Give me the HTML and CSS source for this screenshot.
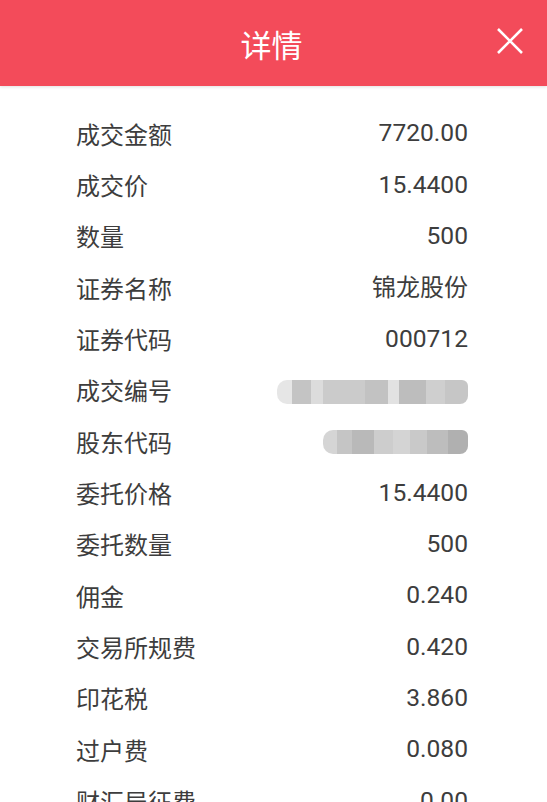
FILE: index.html
```html
<!DOCTYPE html>
<html lang="zh">
<head>
<meta charset="utf-8">
<link rel="stylesheet" href="styles.css">
</head>
<body>
<header class="bar">
  <h1 class="title">详情</h1>
  <svg class="close" viewBox="0 0 26 26" width="26" height="26"><path d="M1 1L25 25M25 1L1 25" stroke="#fff" stroke-width="2.6" fill="none"/></svg>
</header>
<main class="list">
  <div class="row"><span class="k">成交金额</span><span class="v">7720.00</span></div>
  <div class="row"><span class="k">成交价</span><span class="v">15.4400</span></div>
  <div class="row"><span class="k">数量</span><span class="v">500</span></div>
  <div class="row"><span class="k">证券名称</span><span class="v cjk">锦龙股份</span></div>
  <div class="row"><span class="k">证券代码</span><span class="v">000712</span></div>
  <div class="row"><span class="k">成交编号</span><span class="blur blur-a"></span></div>
  <div class="row"><span class="k">股东代码</span><span class="blur blur-b"></span></div>
  <div class="row"><span class="k">委托价格</span><span class="v">15.4400</span></div>
  <div class="row"><span class="k">委托数量</span><span class="v">500</span></div>
  <div class="row"><span class="k">佣金</span><span class="v">0.240</span></div>
  <div class="row"><span class="k">交易所规费</span><span class="v">0.420</span></div>
  <div class="row"><span class="k">印花税</span><span class="v">3.860</span></div>
  <div class="row"><span class="k">过户费</span><span class="v">0.080</span></div>
  <div class="row"><span class="k">财汇局征费</span><span class="v">0.00</span></div>
</main>
</body>
</html>
```
FILE: styles.css
```css
* { box-sizing: border-box; }
html, body { margin: 0; padding: 0; background: #fff; }
body {
  width: 547px;
  height: 802px;
  overflow: hidden;
  font-family: Roboto, "Noto Sans CJK SC", sans-serif;
}
.bar {
  height: 86px;
  background: #f34b5a;
  display: flex;
  align-items: center;
  justify-content: center;
  position: relative;
  box-shadow: 0 1px 3px rgba(0,0,0,0.12);
}
.title {
  margin: 0;
  color: #fff;
  font-size: 31px;
  font-weight: 400;
  line-height: 1;
  font-family: "Noto Sans CJK SC", sans-serif;
  transform: translateX(-2px);
}
.close {
  position: absolute;
  right: 24px;
  top: 28px;
}
.list {
  padding: 22px 79px 0 76px;
}
.row {
  height: 51.33px;
  display: flex;
  align-items: center;
  justify-content: space-between;
  color: #3d3d3d;
  font-size: 24px;
}
.k {
  font-family: "Noto Sans CJK SC", sans-serif;
  font-size: 24px;
  line-height: 1;
}
.v {
  line-height: 1;
  font-size: 24.6px;
}
.v.cjk {
  font-size: 24px;
}
.blur {
  display: block;
  height: 24px;
  border-radius: 10px 6px 8px 10px;
}
.blur-a {
  width: 191px;
  margin-top: 4px;
  background: linear-gradient(90deg, #e6e6e6 0 8%, #c4c4c4 8% 18%, #dcdcdc 18% 24%, #cbcbcb 24% 46%, #c2c2c2 46% 58%, #e2e2e2 58% 64%, #bdbdbd 64% 78%, #cfcfcf 78% 88%, #c6c6c6 88% 100%);
}
.blur-b {
  width: 145px;
  background: linear-gradient(90deg, #d5d5d5 0 10%, #c5c5c5 10% 20%, #b9b9b9 20% 35%, #cdcdcd 35% 48%, #d4d4d4 48% 60%, #c9c9c9 60% 72%, #bdbdbd 72% 86%, #b0b0b0 86% 100%);
}
```
